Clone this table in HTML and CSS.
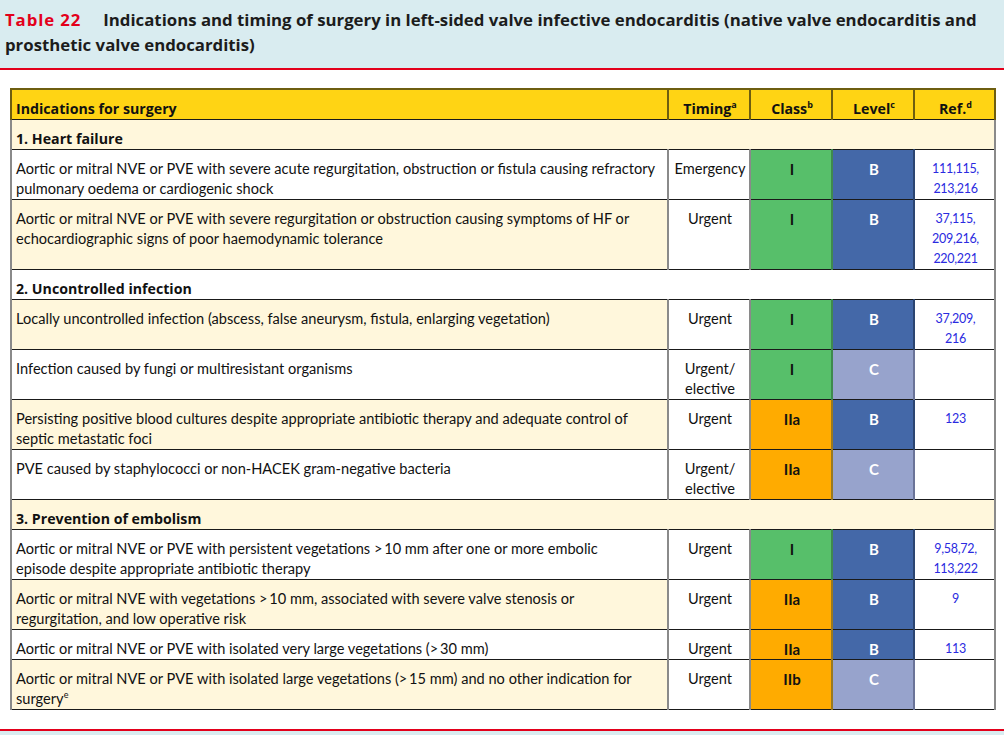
FILE: index.html
```html
<!DOCTYPE html>
<html lang="en">
<head>
<meta charset="utf-8">
<title>Table 22</title>
<link rel="stylesheet" href="styles.css">
</head>
<body>
<div class="caption">
  <span class="tnum">Table 22</span><span class="ttext">Indications and timing of surgery in left-sided valve infective endocarditis (native valve endocarditis and<br>prosthetic valve endocarditis)</span>
</div>
<table class="grid">
  <colgroup>
    <col class="c-ind"><col class="c-tim"><col class="c-cls"><col class="c-lvl"><col class="c-ref">
  </colgroup>
  <thead>
    <tr class="head">
      <th class="h-ind">Indications for surgery</th>
      <th>Timing<sup>a</sup></th>
      <th>Class<sup>b</sup></th>
      <th>Level<sup>c</sup></th>
      <th>Ref.<sup>d</sup></th>
    </tr>
  </thead>
  <tbody>
    <tr class="sec cream"><td colspan="5">1. Heart failure</td></tr>
    <tr>
      <td class="ind">Aortic or mitral NVE or PVE with severe acute regurgitation, obstruction or fistula causing refractory<br>pulmonary oedema or cardiogenic shock</td>
      <td class="tim">Emergency</td>
      <td class="cls g">I</td>
      <td class="lvl b">B</td>
      <td class="ref">111,115,<br>213,216</td>
    </tr>
    <tr>
      <td class="ind cream">Aortic or mitral NVE or PVE with severe regurgitation or obstruction causing symptoms of HF or<br>echocardiographic signs of poor haemodynamic tolerance</td>
      <td class="tim">Urgent</td>
      <td class="cls g">I</td>
      <td class="lvl b">B</td>
      <td class="ref">37,115,<br>209,216,<br>220,221</td>
    </tr>
    <tr class="sec"><td colspan="5">2. Uncontrolled infection</td></tr>
    <tr>
      <td class="ind cream">Locally uncontrolled infection (abscess, false aneurysm, fistula, enlarging vegetation)</td>
      <td class="tim">Urgent</td>
      <td class="cls g">I</td>
      <td class="lvl b">B</td>
      <td class="ref">37,209,<br>216</td>
    </tr>
    <tr>
      <td class="ind">Infection caused by fungi or multiresistant organisms</td>
      <td class="tim">Urgent/<br>elective</td>
      <td class="cls g">I</td>
      <td class="lvl c">C</td>
      <td class="ref"></td>
    </tr>
    <tr>
      <td class="ind cream">Persisting positive blood cultures despite appropriate antibiotic therapy and adequate control of<br>septic metastatic foci</td>
      <td class="tim">Urgent</td>
      <td class="cls o">IIa</td>
      <td class="lvl b">B</td>
      <td class="ref">123</td>
    </tr>
    <tr>
      <td class="ind">PVE caused by staphylococci or non-HACEK gram-negative bacteria</td>
      <td class="tim">Urgent/<br>elective</td>
      <td class="cls o">IIa</td>
      <td class="lvl c">C</td>
      <td class="ref"></td>
    </tr>
    <tr class="sec cream"><td colspan="5">3. Prevention of embolism</td></tr>
    <tr>
      <td class="ind">Aortic or mitral NVE or PVE with persistent vegetations &gt;&#8201;10 mm after one or more embolic<br>episode despite appropriate antibiotic therapy</td>
      <td class="tim">Urgent</td>
      <td class="cls g">I</td>
      <td class="lvl b">B</td>
      <td class="ref">9,58,72,<br>113,222</td>
    </tr>
    <tr>
      <td class="ind cream">Aortic or mitral NVE with vegetations &gt;&#8201;10 mm, associated with severe valve stenosis or<br>regurgitation, and low operative risk</td>
      <td class="tim">Urgent</td>
      <td class="cls o">IIa</td>
      <td class="lvl b">B</td>
      <td class="ref">9</td>
    </tr>
    <tr>
      <td class="ind">Aortic or mitral NVE or PVE with isolated very large vegetations (&gt;&#8201;30 mm)</td>
      <td class="tim">Urgent</td>
      <td class="cls o">IIa</td>
      <td class="lvl b">B</td>
      <td class="ref">113</td>
    </tr>
    <tr>
      <td class="ind cream">Aortic or mitral NVE or PVE with isolated large vegetations (&gt;&#8201;15 mm) and no other indication for<br>surgery<sup>e</sup></td>
      <td class="tim">Urgent</td>
      <td class="cls o">IIb</td>
      <td class="lvl c">C</td>
      <td class="ref"></td>
    </tr>
  </tbody>
</table>
<div class="footer"></div>
</body>
</html>
```
FILE: styles.css
```css
html, body {
  margin: 0;
  padding: 0;
  background: #ffffff;
}
body {
  font-family: "Lato", "Liberation Sans", sans-serif;
  color: #111111;
  width: 1004px;
  height: 735px;
  overflow: hidden;
}
.caption {
  background: #d9ecf0;
  border-bottom: 2px solid #e3001b;
  padding: 7px 10px 11px 5px;
  font-family: "Open Sans", "Lato", sans-serif;
  font-size: 16.8px;
  font-weight: 700;
  line-height: 25px;
  color: #1c1c1c;
  white-space: nowrap;
}
.tnum {
  color: #e3001b;
  letter-spacing: 0.9px;
  margin-right: 22px;
}
.grid {
  margin: 18px 10px 0 10px;
  width: 984px;
  border-collapse: collapse;
  table-layout: fixed;
  font-size: 14.6px;
  line-height: 20px;
}
.c-ind { width: 657px; }
.c-tim { width: 82px; }
.c-cls { width: 82px; }
.c-lvl { width: 82px; }
.c-ref { width: 81px; }

.grid td, .grid th {
  padding: 9px 2px 0 4px;
  border-top: 1px solid #1a1a1a;
  border-bottom: 1px solid #1a1a1a;
  border-left: 2px solid #8a8a8a;
  border-right: 2px solid #8a8a8a;
  vertical-align: top;
  background: #ffffff;
}
.ind {
  white-space: nowrap;
}
.head th {
  background: #ffd414;
  font-family: "Open Sans", "Lato", sans-serif;
  font-size: 14.2px;
  font-weight: 700;
  text-align: center;
  border-top: 2px solid #6e5e10;
  border-left: 2px solid #6e5e10;
  border-right: 2px solid #6e5e10;
  border-bottom: 1px solid #1a1a1a;
}
.head th.h-ind { text-align: left; }
.grid sup {
  font-size: 9px;
  line-height: 0;
  vertical-align: 6px;
}
.sec td {
  font-family: "Open Sans", "Lato", sans-serif;
  font-size: 14.2px;
  font-weight: 700;
}
.grid .cream, .sec.cream td {
  background: #fff7dc;
}
.tim {
  text-align: center;
  padding-left: 1px;
  padding-right: 1px;
}
.cls, .lvl {
  text-align: center;
  vertical-align: middle;
  font-weight: 700;
  font-size: 15px;
}
.grid td.g { background: #57bf6a; border-left-color: #3f8a4d; border-right-color: #3f8a4d; }
.grid td.o { background: #ffab00; border-left-color: #9a7a1e; border-right-color: #9a7a1e; }
.grid td.b { background: #4468a8; color: #ffffff; border-left-color: #2b4470; border-right-color: #2b4470; }
.grid td.c { background: #97a3cc; color: #ffffff; border-left-color: #6a7397; border-right-color: #6a7397; }
.ref {
  text-align: center;
  vertical-align: middle;
  color: #2a2ae0;
  font-size: 12.5px;
  letter-spacing: -0.3px;
  padding-top: 10px;
}
.footer {
  margin-top: 19px;
  border-top: 2px solid #e3001b;
  background: #d9ecf0;
  height: 20px;
}
```
